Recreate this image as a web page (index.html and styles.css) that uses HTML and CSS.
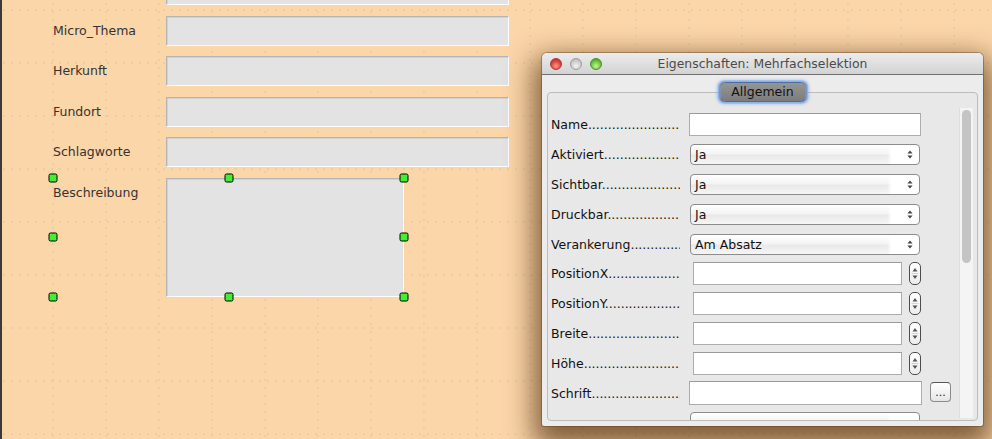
FILE: index.html
```html
<!doctype html>
<html lang="de">

<head>
    <meta charset="utf-8">
    <link rel="stylesheet" href="styles.css">
</head>

<body>

    <div class="canvas">
        <div class="form">
            <div class="lbl"></div>
            <div class="fld"></div>
            <div class="lbl">Micro_Thema</div>
            <div class="fld"></div>
            <div class="lbl">Herkunft</div>
            <div class="fld"></div>
            <div class="lbl">Fundort</div>
            <div class="fld"></div>
            <div class="lbl">Schlagworte</div>
            <div class="fld"></div>

            <div class="sel">
                <div class="lbl">Beschreibung</div>
                <div class="fld area"></div>
                <span class="h h_tl"></span>
                <span class="h h_tc"></span>
                <span class="h h_tr"></span>
                <span class="h h_ml"></span>
                <span class="h h_mr"></span>
                <span class="h h_bl"></span>
                <span class="h h_bc"></span>
                <span class="h h_br"></span>
            </div>
        </div>
    </div>

    <div class="win">
        <div class="titlebar">
            <div class="lights">
                <span class="light red"></span>
                <span class="light grey"></span>
                <span class="light green"></span>
            </div>
            <div class="title">Eigenschaften: Mehrfachselektion</div>
        </div>

        <div class="group">
            <div class="tab">Allgemein</div>

            <div class="rows">
                <div class="row"><span class="key">Name</span><div class="txt name"></div></div>
                <div class="row"><span class="key">Aktiviert</span><div class="combo"><span>Ja</span><svg width="6" height="9" viewBox="0 0 6 9"><path d="M3 0.5 L5.6 3.6 L0.4 3.6 Z M3 8.5 L5.6 5.4 L0.4 5.4 Z" fill="#444"/></svg></div></div>
                <div class="row"><span class="key">Sichtbar</span><div class="combo"><span>Ja</span><svg width="6" height="9" viewBox="0 0 6 9"><path d="M3 0.5 L5.6 3.6 L0.4 3.6 Z M3 8.5 L5.6 5.4 L0.4 5.4 Z" fill="#444"/></svg></div></div>
                <div class="row"><span class="key">Druckbar</span><div class="combo"><span>Ja</span><svg width="6" height="9" viewBox="0 0 6 9"><path d="M3 0.5 L5.6 3.6 L0.4 3.6 Z M3 8.5 L5.6 5.4 L0.4 5.4 Z" fill="#444"/></svg></div></div>
                <div class="row"><span class="key">Verankerung</span><div class="combo"><span>Am Absatz</span><svg width="6" height="9" viewBox="0 0 6 9"><path d="M3 0.5 L5.6 3.6 L0.4 3.6 Z M3 8.5 L5.6 5.4 L0.4 5.4 Z" fill="#444"/></svg></div></div>
                <div class="row"><span class="key">PositionX</span><div class="txt num"></div><div class="spin"><svg width="10" height="21" viewBox="0 0 10 21"><path d="M5 5 L7.5 8.5 L2.5 8.5 Z M5 16 L7.5 12.5 L2.5 12.5 Z" fill="#555"/><path d="M1.5 10.5 H8.5" stroke="#ccc" stroke-width="0.8"/></svg></div></div>
                <div class="row"><span class="key">PositionY</span><div class="txt num"></div><div class="spin"><svg width="10" height="21" viewBox="0 0 10 21"><path d="M5 5 L7.5 8.5 L2.5 8.5 Z M5 16 L7.5 12.5 L2.5 12.5 Z" fill="#555"/><path d="M1.5 10.5 H8.5" stroke="#ccc" stroke-width="0.8"/></svg></div></div>
                <div class="row"><span class="key">Breite</span><div class="txt num"></div><div class="spin"><svg width="10" height="21" viewBox="0 0 10 21"><path d="M5 5 L7.5 8.5 L2.5 8.5 Z M5 16 L7.5 12.5 L2.5 12.5 Z" fill="#555"/><path d="M1.5 10.5 H8.5" stroke="#ccc" stroke-width="0.8"/></svg></div></div>
                <div class="row"><span class="key">Höhe</span><div class="txt num"></div><div class="spin"><svg width="10" height="21" viewBox="0 0 10 21"><path d="M5 5 L7.5 8.5 L2.5 8.5 Z M5 16 L7.5 12.5 L2.5 12.5 Z" fill="#555"/><path d="M1.5 10.5 H8.5" stroke="#ccc" stroke-width="0.8"/></svg></div></div>
                <div class="row"><span class="key">Schrift</span><div class="txt font"></div><div class="more">...</div></div>
                <div class="row"><span class="key blank"></span><div class="combo"></div></div>
            </div>

            <div class="scroll"><div class="thumb"></div></div>
        </div>
    </div>

</body>

</html>
```

FILE: styles.css
```css
* {
    padding: 0;
    margin: 0;
    box-sizing: border-box;
}

html,
body {
    height: 100%;
    overflow: hidden;
}

body {
    font-family: "DejaVu Sans", "Liberation Sans", sans-serif;
    background-color: #fbd6a9;
    background-image:
        radial-gradient(circle, #e3c39c 0.5px, transparent 1px),
        radial-gradient(circle, #e3c39c 0.5px, transparent 1px);
    background-size: 53px 8px, 8px 53px;
    background-position: 26.5px 0, 0 -16.5px;
}

.canvas {
    display: flow-root;
    height: 100%;
    border-left: 2px solid #3c3a38;
}

/* left form */

.form {
    display: grid;
    grid-template-columns: 113px 343px;
    grid-auto-rows: 30px;
    row-gap: 10.5px;
    margin-top: -25px;
    padding-left: 51px;
}

.lbl {
    font-size: 12.5px;
    line-height: 30px;
    color: #333;
}

.fld {
    background: #e3e3e3;
    border: 1px solid;
    border-color: #b4b4b4 #fdfdfd #fdfdfd #b4b4b4;
    box-shadow: inset 1px 1px 0 #d2d2d2;
}

.sel {
    grid-column: 1 / -1;
    grid-row: span 3;
    justify-self: start;
    width: 351px;
    height: 119px;
    display: grid;
    grid-template-columns: 113px 238px;
    position: relative;
}

.area {
    margin-top: 0.5px;
    height: 119px;
}

.h {
    position: absolute;
    width: 9px;
    height: 9px;
    background: #44ee33;
    border: 1px solid #000;
    border-radius: 2px;
    transform: translate(-50%, -50%);
}

.h_tl { left: 0; top: 0; }
.h_tc { left: 50%; top: 0; }
.h_tr { left: 100%; top: 0; }
.h_ml { left: 0; top: 50%; }
.h_mr { left: 100%; top: 50%; }
.h_bl { left: 0; top: 100%; }
.h_bc { left: 50%; top: 100%; }
.h_br { left: 100%; top: 100%; }

/* properties window */

.win {
    position: absolute;
    left: 542px;
    top: 53px;
    width: 441px;
    height: 373px;
    background: #ececec;
    border-radius: 5px 5px 2px 2px;
    box-shadow: 0 0 0 1px rgba(90, 60, 30, 0.4), 0 12px 28px 8px rgba(75, 42, 10, 0.7);
    display: flex;
    flex-direction: column;
}

.titlebar {
    flex: none;
    height: 22px;
    display: grid;
    align-items: center;
    background: linear-gradient(#ececec, #d3d3d3);
    border-bottom: 1px solid #707070;
    border-radius: 5px 5px 0 0;
}

.lights,
.title {
    grid-area: 1 / 1;
}

.lights {
    display: flex;
    gap: 8px;
    padding-left: 8px;
}

.light {
    width: 12px;
    height: 12px;
    border-radius: 50%;
}

.red {
    background: radial-gradient(circle at 50% 70%, #ff9a8f, #e0433a 55%, #a82a22);
    border: 1px solid #a33b34;
}

.grey {
    background: radial-gradient(circle at 50% 70%, #f2f2f2, #cfcfcf 55%, #a9a9a9);
    border: 1px solid #9c9c9c;
}

.green {
    background: radial-gradient(circle at 50% 70%, #c8f59b, #6cc43c 55%, #3c8a1e);
    border: 1px solid #4e8d31;
}

.title {
    justify-self: center;
    font-size: 12.4px;
    color: #4b4b4b;
}

.group {
    flex: 1;
    min-height: 0;
    margin: 17px 5px 5px 5px;
    border: 1px solid #bcbcbc;
    border-radius: 4px;
    background: #e8e8e8;
    position: relative;
    display: flex;
}

.tab {
    position: absolute;
    top: -11px;
    left: 50%;
    transform: translateX(-50%);
    width: 87px;
    height: 20px;
    border-radius: 5px;
    background: linear-gradient(#959595, #7c7c7c);
    border: 1px solid #4e6f9e;
    box-shadow: 0 0 0 1.5px #8ab1ea, 0 0 3px 2px rgba(100, 150, 230, 0.55);
    font-size: 12.5px;
    line-height: 18px;
    text-align: center;
    color: #111;
}

.rows {
    flex: 1;
    overflow: hidden;
    padding: 17px 0 0 3px;
}

.row {
    height: 29.8px;
    display: flex;
    align-items: center;
}

.key {
    width: 129px;
    flex: none;
    overflow: hidden;
    white-space: nowrap;
    font-size: 12.5px;
    color: #111;
}

.key::after {
    content: "..........................................";
}

.key.blank::after {
    content: "";
}

.txt {
    height: 23px;
    background: #fff;
    border: 1px solid #adadad;
    border-top-color: #9a9a9a;
}

.name {
    width: 232px;
    margin-left: 9px;
}

.num {
    width: 209px;
    margin-left: 13px;
}

.font {
    width: 233px;
    height: 24px;
    margin-left: 9px;
}

.combo {
    flex: none;
    width: 230px;
    height: 21px;
    margin-left: 10px;
    border: 1px solid #8c8c8c;
    border-radius: 4px;
    background: linear-gradient(90deg, rgba(255, 255, 255, 0) 86%, #fff 88%), linear-gradient(#fff, #f4f4f4 45%, #e9e9e9 55%, #f6f6f6);
    display: flex;
    align-items: center;
    justify-content: space-between;
    padding: 0 6px 0 4px;
    font-size: 12.5px;
    color: #111;
}

.spin {
    width: 12px;
    height: 23px;
    margin-left: 7px;
    border: 1px solid #4d4d4d;
    border-radius: 5px;
    background: linear-gradient(#fff, #ededed);
    display: flex;
    justify-content: center;
}

.more {
    width: 21px;
    height: 20px;
    margin-left: 8px;
    margin-top: -3px;
    border: 1px solid #8a8a8a;
    border-top-color: #555;
    border-radius: 4px;
    background: linear-gradient(#fff, #e6e6e6);
    font-size: 11px;
    line-height: 20px;
    text-align: center;
    color: #222;
}

.scroll {
    width: 14px;
    margin: 15px 4px 2px 0;
    background: #f4f4f4;
    border-left: 1px solid #dedede;
    padding: 2px 2px 0 2px;
}

.thumb {
    height: 153px;
    border-radius: 5px;
    background: #c4c4c4;
}
```
